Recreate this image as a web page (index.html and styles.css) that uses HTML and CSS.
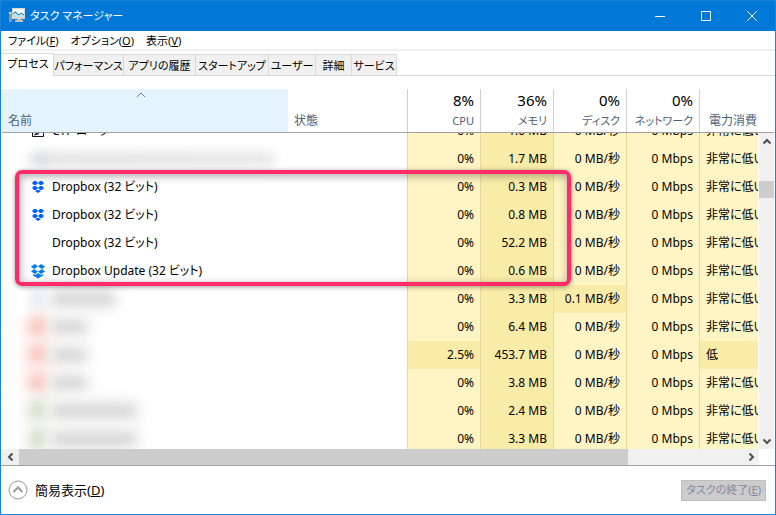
FILE: index.html
```html
<!DOCTYPE html>
<html lang="ja">
<head>
<meta charset="utf-8">
<title>タスク マネージャー</title>
<link rel="stylesheet" href="styles.css">
</head>
<body>
<div class="window">
  <header class="titlebar">
    <svg class="app-icon" viewBox="0 0 16 16" aria-hidden="true">
      <path d="M0 4h3v10H0z" fill="#8d9aa3"/><path d="M0 4h2v2H0z" fill="#d7dde0"/><path d="M0 7h1v2H0z" fill="#48c84c"/>
      <path d="M3 0h13v11H3z" fill="#d9d5d0"/><path d="M4 1h11v8H4z" fill="#f2fafd"/>
      <path d="M4 5l2-2 2 1 2 2 2-1 3 1v3H4z" fill="#b9e4f4"/><path d="M4 6l2-2 4 3 2-2 3 2" fill="none" stroke="#147eb5"/>
      <path d="M8 11h4v1h2v2H6v-2h2z" fill="#c4c1bd"/>
    </svg>
    <h1 class="title">タスク マネージャー</h1>
    <button class="caption" aria-label="最小化"><svg viewBox="0 0 10 10"><path d="M0 5.500h10"/></svg></button>
    <button class="caption" aria-label="最大化"><svg viewBox="0 0 10 10"><path d="M.5.5h9v9h-9z"/></svg></button>
    <button class="caption" aria-label="閉じる"><svg viewBox="0 0 10 10"><path d="M0 0l10 10M10 0L0 10"/></svg></button>
  </header>
  <nav class="menu">
    <button>ファイル(<u>F</u>)</button>
    <button>オプション(<u>O</u>)</button>
    <button>表示(<u>V</u>)</button>
  </nav>
  <div class="tabs" role="tablist">
    <button class="tab active" role="tab" aria-selected="true">プロセス</button>
    <button class="tab" role="tab">パフォーマンス</button>
    <button class="tab" role="tab">アプリの履歴</button>
    <button class="tab" role="tab">スタートアップ</button>
    <button class="tab" role="tab">ユーザー</button>
    <button class="tab" role="tab">詳細</button>
    <button class="tab" role="tab">サービス</button>
  </div>
  <main class="list">
    <table class="processes">
      <thead>
        <tr>
          <th class="sorted"><svg class="sort" viewBox="0 0 10 6" aria-hidden="true"><path d="M1 5l4-4 4 4"/></svg>名前</th>
          <th>状態</th>
          <th class="num"><b>8%</b>CPU</th>
          <th class="num"><b>36%</b>メモリ</th>
          <th class="num"><b>0%</b>ディスク</th>
          <th class="num"><b>0%</b>ネットワーク</th>
          <th class="power">電力消費</th>
        </tr>
      </thead>
      <tbody>
        <tr><td class="name"><svg class="icon" viewBox="0 0 16 16"><path d="M2.500 1.500h11v12h-11z" fill="#fff" stroke="#111"/><path d="M5 11l5-8 3 2-5 7z" fill="#2147c7"/><path d="M4 12l3-1" stroke="#111"/></svg>CTF ローダー</td><td></td><td>0%</td><td class="warm">1.0 MB</td><td>0 MB/秒</td><td>0 Mbps</td><td>非常に低い</td></tr>
        <tr><td class="name"><span class="haze top"></span></td><td></td><td>0%</td><td class="warm">1.7 MB</td><td>0 MB/秒</td><td>0 Mbps</td><td>非常に低い</td></tr>
        <tr><td class="name"><svg class="icon" viewBox="0 0 16 16"><use href="#box-small"/></svg>Dropbox (32 ビット)</td><td></td><td>0%</td><td class="warm">0.3 MB</td><td>0 MB/秒</td><td>0 Mbps</td><td>非常に低い</td></tr>
        <tr><td class="name"><svg class="icon" viewBox="0 0 16 16"><use href="#box-small"/></svg>Dropbox (32 ビット)</td><td></td><td>0%</td><td class="warm">0.8 MB</td><td>0 MB/秒</td><td>0 Mbps</td><td>非常に低い</td></tr>
        <tr><td class="name"><span class="icon"></span>Dropbox (32 ビット)</td><td></td><td>0%</td><td class="warm">52.2 MB</td><td>0 MB/秒</td><td>0 Mbps</td><td>非常に低い</td></tr>
        <tr><td class="name"><svg class="icon" viewBox="0 0 16 16"><use href="#box-large"/></svg>Dropbox Update (32 ビット)</td><td></td><td>0%</td><td class="warm">0.6 MB</td><td>0 MB/秒</td><td>0 Mbps</td><td>非常に低い</td></tr>
        <tr><td class="name"><span class="smudge blue"></span><span class="haze mid"></span></td><td></td><td>0%</td><td class="warm">3.3 MB</td><td class="warm">0.1 MB/秒</td><td>0 Mbps</td><td>非常に低い</td></tr>
        <tr><td class="name"><span class="smudge red"></span><span class="haze"></span></td><td></td><td>0%</td><td class="warm">6.4 MB</td><td>0 MB/秒</td><td>0 Mbps</td><td>非常に低い</td></tr>
        <tr><td class="name"><span class="smudge red"></span><span class="haze"></span></td><td></td><td class="warm">2.5%</td><td class="warm">453.7 MB</td><td>0 MB/秒</td><td>0 Mbps</td><td class="warm">低</td></tr>
        <tr><td class="name"><span class="smudge red"></span><span class="haze"></span></td><td></td><td>0%</td><td class="warm">3.8 MB</td><td>0 MB/秒</td><td>0 Mbps</td><td>非常に低い</td></tr>
        <tr><td class="name"><span class="smudge green"></span><span class="haze long"></span></td><td></td><td>0%</td><td class="warm">2.4 MB</td><td>0 MB/秒</td><td>0 Mbps</td><td>非常に低い</td></tr>
        <tr><td class="name"><span class="smudge green"></span><span class="haze long"></span></td><td></td><td>0%</td><td class="warm">3.3 MB</td><td>0 MB/秒</td><td>0 Mbps</td><td>非常に低い</td></tr>
      </tbody>
    </table>
    <div class="vscroll">
      <button aria-label="上へ"><svg viewBox="0 0 10 10"><path d="M1.500 6.500L5 3l3.500 3.500"/></svg></button>
      <span class="vthumb"></span>
      <button aria-label="下へ"><svg viewBox="0 0 10 10"><path d="M1.500 3.500L5 7l3.500-3.500"/></svg></button>
    </div>
    <div class="hscroll">
      <button aria-label="左へ"><svg viewBox="0 0 10 10"><path d="M6.500 1.500L3 5l3.500 3.500"/></svg></button>
      <span class="hthumb"></span>
      <button aria-label="右へ"><svg viewBox="0 0 10 10"><path d="M3.500 1.500L7 5 3.500 8.500"/></svg></button>
    </div>
    <div class="marker"></div>
  </main>
  <footer class="footer">
    <button class="fewer"><svg viewBox="0 0 20 20" aria-hidden="true"><circle cx="10" cy="10" r="9"/><path class="chevron" d="M5.500 12L10 7.500l4.500 4.500"/></svg>簡易表示(<u>D</u>)</button>
    <button class="end" disabled>タスクの終了(<u>E</u>)</button>
  </footer>
</div>
<svg class="defs" aria-hidden="true">
  <symbol id="box-small" viewBox="0 0 16 16"><path fill="#0061ff" d="M4 2h2l2 2-2 2H4L2 4zM10 2h2l2 2-2 2h-2L8 4zM4 7h2l2 2-2 2H4L2 9zM10 7h2l2 2-2 2h-2L8 9zM7 11h2l2 1-3 2-3-2z"/></symbol>
  <symbol id="box-large" viewBox="0 0 16 16"><path fill="#007ee5" d="M5 1l3 2.500L4 6 1 3.500zM11 1l4 2.500L12 6 8 3.500zM1 8.500L4 6l4 2.500L5 11zM15 8.500L12 6 8 8.500l3 2.500zM8 10l3 2 2-1v1.500L8 15.500l-5-3V11l2 1z"/></symbol>
</svg>
</body>
</html>
```
FILE: styles.css
```css
* { box-sizing: border-box; }
body {
  margin: 0;
  font: 12px/16px "Noto Sans", "Noto Sans CJK JP", sans-serif;
  font-feature-settings: "palt";
  color: #000;
}
button {
  font: inherit;
  font-feature-settings: inherit;
  color: inherit;
  border: 0;
  padding: 0;
  background: none;
  white-space: nowrap;
}
.defs { position: absolute; width: 0; height: 0; }
.window {
  display: flex;
  flex-direction: column;
  height: 100vh;
  border: 1px solid #1883d7;
  background: #fff;
}
.titlebar {
  display: flex;
  flex: none;
  align-items: center;
  height: 30px;
  background: #0078d7;
  color: #fff;
}
.app-icon { width: 16px; height: 16px; margin: 0 5px 0 8px; }
.title { flex: 1; margin: 0; font-size: 11px; font-weight: 400; }
.caption { display: flex; align-items: center; justify-content: center; width: 46px; height: 30px; }
.caption svg { width: 10px; height: 10px; fill: none; stroke: #fff; }
.menu {
  display: flex;
  flex: none;
  gap: 12px;
  height: 20px;
  padding: 1px 7px 0;
  border-bottom: 2px solid #f0f0f0;
  font-size: 11px;
}
.tabs {
  display: grid;
  flex: none;
  grid-template-columns: 53px 70px 72px 73px 47px 36px 45px 1fr;
  align-items: end;
  height: 25px;
  border-bottom: 1px solid #d9d9d9;
}
.tab {
  height: 21px;
  padding-top: 1px;
  border: 1px solid #d9d9d9;
  border-width: 1px 1px 0 0;
  background: #f0f0f0;
  font-size: 11px;
}
.tab.active { height: 23px; margin-bottom: -1px; padding: 0 0 3px 2px; background: #fff; }
.list {
  position: relative;
  display: grid;
  flex: 1;
  grid-template-columns: 1fr 15px;
  grid-template-rows: 1fr 16px;
  min-height: 0;
  margin-top: 13px;
  padding: 0 1px;
  border-bottom: 1px solid #a0a0a0;
}
.processes { display: flex; flex-direction: column; min-width: 0; min-height: 0; }
.processes tr { display: grid; grid-template-columns: 286px 1fr repeat(4, 73px) 60px; }
.processes thead { flex: none; margin-right: -15px; padding-right: 15px; border-bottom: 1px solid #a0a0a0; display: block; }
.processes th {
  display: flex;
  flex-direction: column;
  justify-content: flex-end;
  height: 43px;
  padding: 0 6px 3px;
  color: #4c607a;
  font-weight: 400;
  text-align: left;
  white-space: nowrap;
}
.processes th.sorted { position: relative; background: #e5f3ff; }
.sort { position: absolute; top: 3px; left: 134px; width: 10px; height: 6px; fill: none; stroke: #6d7f96; }
.processes .num, .processes .power { border-left: 1px solid #d0d0d0; }
.processes .num { font-size: 11px; text-align: right; }
.processes .power { padding-left: 9px; }
.processes b { color: #000; font-size: 15px; font-weight: 400; line-height: 18px; margin-bottom: 4px; }
.processes tbody { display: block; flex: 1; min-height: 0; overflow: hidden; }
.processes tbody tr:first-child { margin-top: -16px; }
.processes td {
  height: 28px;
  padding: 0 6px;
  border-left: 1px solid #ead7a0;
  background: #fff4c4;
  line-height: 28px;
  text-align: right;
  white-space: nowrap;
  overflow: hidden;
}
.processes td:nth-child(-n+2) { border: 0; background: none; }
.processes td.warm { background: #f9eca8; }
.processes td:last-child { border-right: 1px solid #fff; text-align: left; }
.processes td.name { display: flex; align-items: center; padding: 0 0 0 28px; text-align: left; overflow: visible; }
.icon { width: 16px; height: 16px; margin-right: 6px; }
.smudge { width: 18px; height: 20px; margin-right: 4px; border-radius: 9px; filter: blur(6px); }
.blue { background: #dcebf5; }
.red { background: #f9beb8; box-shadow: 0 0 8px 8px #fdece8; }
.green { background: #d3dac4; box-shadow: 0 0 8px 8px #f4f6ef; }
.haze { width: 34px; height: 12px; border-radius: 6px; background: #d4d4d4; box-shadow: 0 0 6px 7px #f3f3f3; filter: blur(6px); }
.haze.mid { width: 62px; }
.haze.long { width: 84px; }
.haze.top { width: 245px; height: 12px; box-shadow: none; background: linear-gradient(90deg, #c4cbd0, #dedede 10%, #e2e2e2); }
.vscroll, .hscroll { display: flex; justify-content: space-between; background: #f0f0f0; }
.vscroll { flex-direction: column; margin-top: 44px; }
.vscroll button, .hscroll button { display: flex; align-items: center; justify-content: center; width: 17px; height: 17px; }
.vscroll button { width: 15px; }
.hscroll button { height: 16px; }
.vscroll svg, .hscroll svg { width: 10px; height: 10px; fill: none; stroke: #505050; stroke-width: 2; }
.vthumb { height: 17px; margin: 31px 0 auto; background: #cdcdcd; }
.hthumb { flex: 0 0 80.4%; margin-right: auto; background: #cdcdcd; }
.marker {
  position: absolute;
  top: 81px;
  left: 14px;
  width: 556px;
  height: 116px;
  border: 4px solid #ff2b69;
  border-radius: 7px;
  box-shadow: 0 1px 5px rgba(0, 0, 0, .4), inset 1px 2px 8px rgba(0, 0, 0, .35);
  pointer-events: none;
}
.footer { display: flex; flex: none; align-items: center; justify-content: space-between; height: 48px; padding: 0 9px 0 7px; }
.fewer { display: flex; align-items: center; font-size: 13px; }
.fewer svg { width: 20px; height: 20px; margin-right: 7px; fill: none; stroke: #999; }
.fewer .chevron { stroke-width: 2; }
.end { height: 21px; padding: 0 4px; border: 1px solid #bfbfbf; background: #ccc; color: #8388a0; font-size: 11px; }
```
